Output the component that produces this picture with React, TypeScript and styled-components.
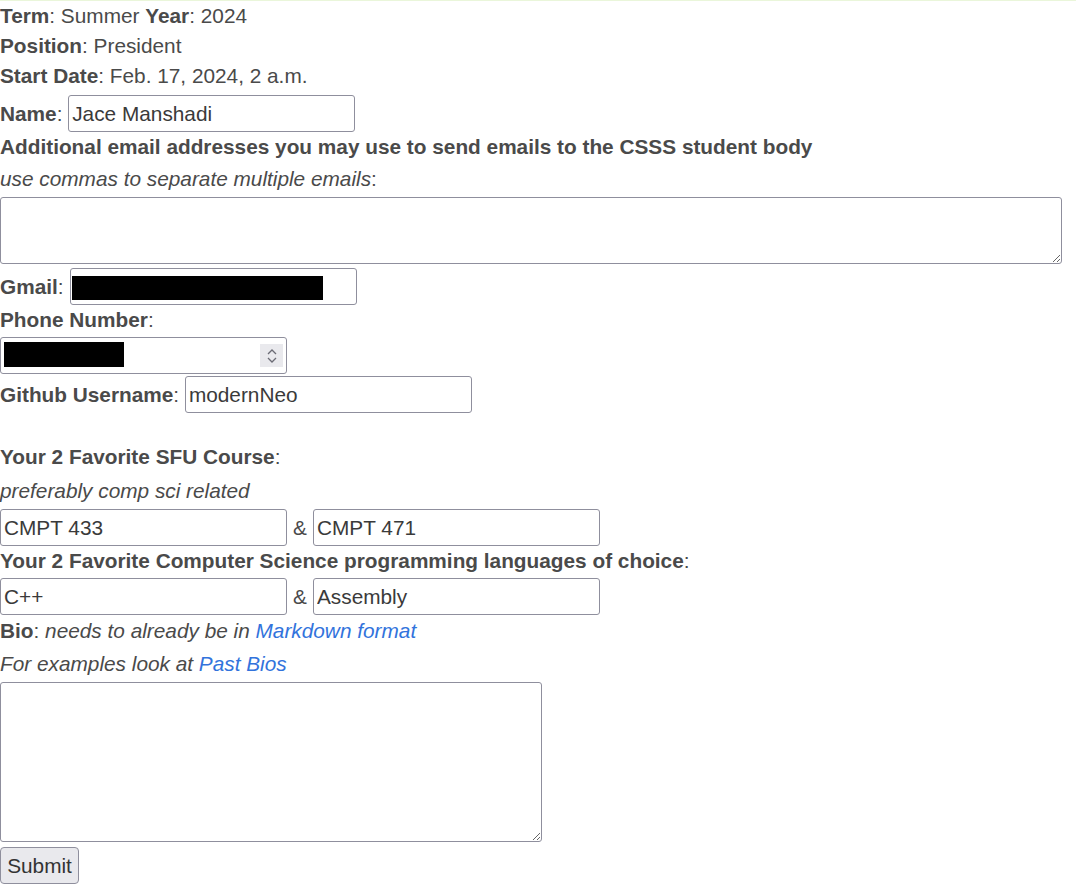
import React from "react";
import styled, { createGlobalStyle } from "styled-components";

const Global = createGlobalStyle`
  html, body { margin: 0; padding: 0; background: #fff; }
  body { font-family: "Liberation Sans", Arial, sans-serif; font-size: 20.8px; color: #4a4a4a; }
  * { box-sizing: border-box; }
`;

const Page = styled.form`
  border-top: 2px solid #eaf6da;
  margin-top: -1px;
  width: 1076px;
`;

const Line = styled.div<{ $mt?: number }>`
  line-height: 30px;
  height: 30px;
  margin-top: ${(p) => p.$mt ?? 0}px;
  white-space: nowrap;
`;

const Row = styled.div<{ $mt?: number }>`
  display: flex;
  align-items: center;
  height: 37px;
  margin-top: ${(p) => p.$mt ?? 0}px;
  white-space: nowrap;
`;

const Label = styled.b`
  font-weight: 700;
`;

const Hint = styled.i`
  font-style: italic;
`;

const Link = styled.a`
  color: #3273dc;
  text-decoration: none;
  font-style: italic;
`;

const Field = styled.input<{ $w?: number }>`
  width: ${(p) => p.$w ?? 287}px;
  height: 37px;
  border: 1px solid #8f8f9d;
  border-radius: 3px;
  padding: 0 3px;
  font-family: "Liberation Sans", Arial, sans-serif;
  font-size: 20.8px;
  color: #3a3a3a;
  background: #fff;
  margin: 0;
`;

const Area = styled.textarea<{ $w: number; $h: number; $mt?: number }>`
  display: block;
  width: ${(p) => p.$w}px;
  height: ${(p) => p.$h}px;
  margin: ${(p) => p.$mt ?? 0}px 0 0 0;
  border: 1px solid #8f8f9d;
  border-radius: 3px;
  font-family: "Liberation Sans", Arial, sans-serif;
  font-size: 20.8px;
`;

const Amp = styled.span`
  width: 26px;
  text-align: center;
`;

const FieldWrap = styled.div<{ $mt?: number }>`
  position: relative;
  width: 287px;
  height: 37px;
  margin-top: ${(p) => p.$mt ?? 0}px;
`;

const Redact = styled.div<{ $x: number; $y: number; $w: number; $h: number }>`
  position: absolute;
  left: ${(p) => p.$x}px;
  top: ${(p) => p.$y}px;
  width: ${(p) => p.$w}px;
  height: ${(p) => p.$h}px;
  background: #000;
  pointer-events: none;
`;

const Spinner = styled.div`
  position: absolute;
  right: 4px;
  top: 7px;
  width: 23px;
  height: 23px;
  background: #e9e9ed;
  display: flex;
  align-items: center;
  justify-content: center;
`;

const SubmitButton = styled.button`
  display: block;
  margin-top: 5px;
  width: 79px;
  height: 37px;
  padding: 0;
  background: #e9e9ed;
  border: 1px solid #8f8f9d;
  border-radius: 4px;
  font-family: "Liberation Sans", Arial, sans-serif;
  font-size: 20.8px;
  color: #333;
`;

const GmailBox = styled.div`
  position: relative;
  margin-left: 6px;
`;

export default function App() {
  return (
    <>
      <Global />
      <Page onSubmit={(e) => e.preventDefault()}>
        <Line>
          <Label>Term</Label>: Summer <Label>Year</Label>: 2024
        </Line>
        <Line>
          <Label>Position</Label>: President
        </Line>
        <Line>
          <Label>Start Date</Label>: Feb. 17, 2024, 2 a.m.
        </Line>
        <Row $mt={4}>
          <Label>Name</Label>:&nbsp;
          <Field defaultValue="Jace Manshadi" />
        </Row>
        <Line>
          <Label>Additional email addresses you may use to send emails to the CSSS student body</Label>
        </Line>
        <Line $mt={2}>
          <Hint>use commas to separate multiple emails</Hint>:
        </Line>
        <Area $w={1062} $h={67} $mt={3} />
        <Row $mt={4}>
          <Label>Gmail</Label>:
          <GmailBox>
            <Field />
            <Redact $x={2} $y={8} $w={251} $h={24} />
          </GmailBox>
        </Row>
        <Line>
          <Label>Phone Number</Label>:
        </Line>
        <FieldWrap $mt={2}>
          <Field />
          <Redact $x={4} $y={5} $w={120} $h={25} />
          <Spinner>
            <svg width="12" height="18" viewBox="0 0 12 18" fill="none" stroke="#6b6b75" strokeWidth="1.3">
              <polyline points="2,7 6,3 10,7" />
              <polyline points="2,11 6,15 10,11" />
            </svg>
          </Spinner>
        </FieldWrap>
        <Row $mt={2}>
          <Label>Github Username</Label>:&nbsp;
          <Field defaultValue="modernNeo" />
        </Row>
        <Line $mt={29}>
          <Label>Your 2 Favorite SFU Course</Label>:
        </Line>
        <Line $mt={4}>
          <Hint>preferably comp sci related</Hint>
        </Line>
        <Row $mt={3}>
          <Field defaultValue="CMPT 433" />
          <Amp>&amp;</Amp>
          <Field defaultValue="CMPT 471" />
        </Row>
        <Line>
          <Label>Your 2 Favorite Computer Science programming languages of choice</Label>:
        </Line>
        <Row $mt={2}>
          <Field defaultValue="C++" />
          <Amp>&amp;</Amp>
          <Field defaultValue="Assembly" />
        </Row>
        <Line $mt={1}>
          <Label>Bio</Label>: <Hint>needs to already be in </Hint>
          <Link href="#">Markdown format</Link>
        </Line>
        <Line $mt={3}>
          <Hint>For examples look at </Hint>
          <Link href="#">Past Bios</Link>
        </Line>
        <Area $w={542} $h={160} $mt={3} />
        <SubmitButton type="submit">Submit</SubmitButton>
      </Page>
    </>
  );
}
